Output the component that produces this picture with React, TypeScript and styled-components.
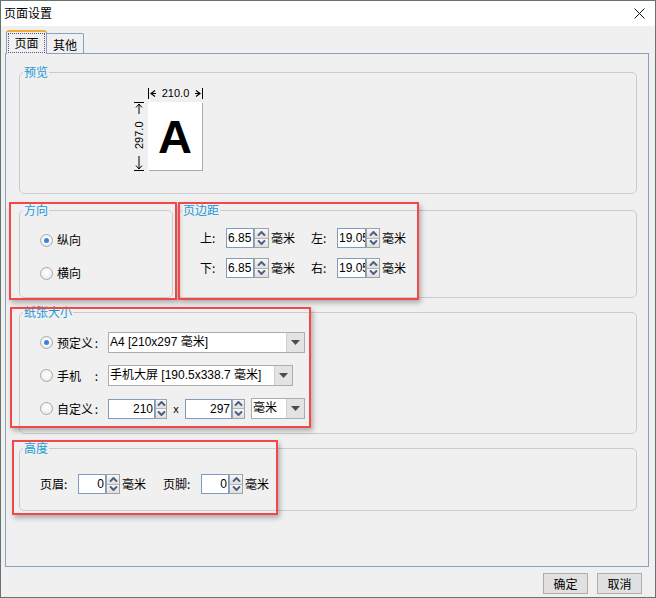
import React from "react";
import styled, { createGlobalStyle } from "styled-components";

const GlobalStyle = createGlobalStyle`
  html, body {
    margin: 0;
    padding: 0;
    background: #ffffff;
  }
  body {
    font-family: "Noto Sans CJK SC", "Liberation Sans", sans-serif;
    font-size: 12px;
    color: #000;
  }
  * {
    box-sizing: border-box;
  }
`;

const FONT_UI = `"Noto Sans CJK SC", "Liberation Sans", sans-serif`;
const FONT_NUM = `"Liberation Sans", "Noto Sans CJK SC", sans-serif`;

const Window = styled.div`
  position: relative;
  width: 656px;
  height: 598px;
  border: 1px solid #66756a;
  background: #f0f0f0;
  display: flex;
  flex-direction: column;
`;

const TitleBar = styled.div`
  height: 25px;
  background: #ffffff;
  display: flex;
  align-items: center;
  justify-content: space-between;
  padding: 0 10px 2px 3px;
  font-size: 12px;
  line-height: 16px;
`;

const CloseIcon = styled.svg`
  width: 11px;
  height: 11px;
  margin-top: 2px;
`;

const TabRow = styled.div`
  height: 27px;
  display: flex;
  align-items: flex-end;
  padding-left: 5px;
`;

const Tab = styled.div<{ $active?: boolean }>`
  position: relative;
  z-index: ${(p) => (p.$active ? 1 : 0)};
  height: ${(p) => (p.$active ? 24 : 20)}px;
  width: ${(p) => (p.$active ? 41 : 37)}px;
  margin-bottom: ${(p) => (p.$active ? -1 : 0)}px;
  border: 1px solid #8ba0bd;
  border-left: ${(p) => (p.$active ? "1px solid #8ba0bd" : "none")};
  border-bottom: none;
  border-top: ${(p) => (p.$active ? "2px solid #f2b033" : "1px solid #8ba0bd")};
  border-radius: ${(p) => (p.$active ? "3px 3px 0 0" : "0 2px 0 0")};
  background: #f0f0f0;
  display: flex;
  align-items: center;
  justify-content: center;
  padding: ${(p) => (p.$active ? "1px 1px 1px 1px" : "1px 0 0 0")};
  font-size: 12px;
`;

const TabFocus = styled.span`
  flex: 1;
  align-self: stretch;
  border: 1px dotted #55558a;
  display: flex;
  align-items: center;
  justify-content: center;
  line-height: 16px;
`;

const Panel = styled.div`
  height: 514px;
  margin: 0 6px 0 4px;
  border: 1px solid #8ba0bd;
  padding: 10px 11px 0 13px;
  display: flex;
  flex-direction: column;
`;

const Group = styled.fieldset<{ $h: number; $w?: number; $mt?: number; $grow?: boolean }>`
  margin: ${(p) => p.$mt ?? 0}px 0 0 0;
  padding: 0;
  min-width: 0;
  height: ${(p) => p.$h}px;
  width: ${(p) => (p.$w ? `${p.$w}px` : "auto")};
  flex: ${(p) => (p.$grow ? "1 1 0" : "none")};
  border: 1px solid #cbcbcb;
  border-radius: 5px;
`;

const Legend = styled.legend`
  margin-left: 3px;
  padding: 0 1px;
  color: #1a9ad6;
  font-size: 12px;
  line-height: 16px;
`;

const SplitRow = styled.div`
  display: flex;
  gap: 5px;
  margin-top: 8px;
`;

/* ---------- preview ---------- */

const PreviewBody = styled.div`
  display: flex;
  padding: 7px 0 0 113px;
`;

const VDim = styled.div`
  width: 12px;
  height: 69px;
  margin: 15px 3px 0 0;
  display: flex;
  flex-direction: column;
  align-items: center;
`;

const VDimText = styled.span`
  writing-mode: vertical-rl;
  transform: rotate(180deg);
  font-family: ${FONT_NUM};
  font-size: 11px;
  line-height: 12px;
  height: 35px;
  text-align: center;
`;

const PreviewCol = styled.div`
  display: flex;
  flex-direction: column;
`;

const HDim = styled.div`
  width: 55px;
  height: 15px;
  display: flex;
  align-items: flex-start;
  justify-content: space-between;
  padding-top: 1px;
`;

const HDimText = styled.span`
  font-family: ${FONT_NUM};
  font-size: 11px;
  line-height: 11px;
`;

const Page = styled.div`
  width: 54px;
  height: 68px;
  background: #ffffff;
  box-shadow: 1px 1px 0 #a9a9a9;
  display: flex;
  align-items: center;
  justify-content: center;
  font-family: "Liberation Sans", sans-serif;
  font-weight: bold;
  font-size: 47px;
  line-height: 47px;
  padding-top: 1px;
`;

/* ---------- controls ---------- */

const RadioList = styled.div`
  display: flex;
  flex-direction: column;
  gap: 13px;
  padding: 12px 0 0 20px;
`;

const RadioLine = styled.div<{ $h?: number }>`
  display: flex;
  align-items: center;
  height: ${(p) => p.$h ?? 20}px;
`;

const RadioCircle = styled.span<{ $on?: boolean }>`
  width: 13px;
  height: 13px;
  border-radius: 50%;
  border: 1px solid #a9a9a9;
  background: radial-gradient(circle at 50% 40%, #ffffff 0%, #f2f2f2 55%, #dedede 100%);
  display: inline-flex;
  align-items: center;
  justify-content: center;
  margin-right: 4px;
  flex: none;
  &::after {
    content: "";
    display: ${(p) => (p.$on ? "block" : "none")};
    width: 5px;
    height: 5px;
    border-radius: 50%;
    background: #3b80e0;
  }
`;

const Text = styled.span`
  font-family: ${FONT_UI};
  font-size: 12px;
  line-height: 20px;
  white-space: nowrap;
`;

const FieldLabel = styled.span<{ $w: number; $ml?: number }>`
  width: ${(p) => p.$w}px;
  margin-left: ${(p) => p.$ml ?? 0}px;
  font-size: 12px;
  line-height: 20px;
  white-space: nowrap;
  flex: none;
`;

const Unit = styled.span`
  margin-left: 2px;
  font-size: 12px;
  line-height: 20px;
  white-space: nowrap;
`;

const SpinWrap = styled.span`
  display: inline-flex;
  flex: none;
`;

const NumInput = styled.input<{ $w: number; $h: number; $right?: boolean }>`
  width: ${(p) => p.$w}px;
  height: ${(p) => p.$h}px;
  border: 1px solid #7f9bc2;
  background: #ffffff;
  padding: ${(p) => (p.$right ? "0 1px 0 1px" : "0 0 0 1px")};
  margin: 0;
  font-family: ${FONT_NUM};
  font-size: 12px;
  color: #000;
  text-align: ${(p) => (p.$right ? "right" : "left")};
  outline: none;
`;

const SpinBtns = styled.span<{ $w: number; $h: number }>`
  width: ${(p) => p.$w}px;
  height: ${(p) => p.$h}px;
  display: flex;
  flex-direction: column;
  border: 1px solid #a2a2a2;
  background: #e8e8e8;
`;

const SpinBtn = styled.span<{ $down?: boolean }>`
  flex: 1;
  display: flex;
  align-items: center;
  justify-content: center;
  background: linear-gradient(#f7f7f7, #dedede);
  border-top: ${(p) => (p.$down ? "1px solid #b4b4b4" : "none")};
  & > svg {
    width: 9px;
    height: 5px;
  }
`;

const Spinner = ({
  value,
  w,
  bw,
  h = 20,
  right
}: {
  value: string;
  w: number;
  bw: number;
  h?: number;
  right?: boolean;
}) => (
  <SpinWrap>
    <NumInput $w={w} $h={h} $right={right} value={value} readOnly />
    <SpinBtns $w={bw} $h={h}>
      <SpinBtn>
        <svg viewBox="0 0 9 5">
          <path d="M1 4.6 L4.5 1 L8 4.6" fill="none" stroke="#4a5d82" strokeWidth="2" />
        </svg>
      </SpinBtn>
      <SpinBtn $down>
        <svg viewBox="0 0 9 5">
          <path d="M1 0.4 L4.5 4 L8 0.4" fill="none" stroke="#4a5d82" strokeWidth="2" />
        </svg>
      </SpinBtn>
    </SpinBtns>
  </SpinWrap>
);

const Combo = styled.div<{ $w: number; $ml?: number }>`
  width: ${(p) => p.$w}px;
  height: 21px;
  margin-left: ${(p) => p.$ml ?? 0}px;
  border: 1px solid #adadad;
  background: #ffffff;
  display: flex;
  flex: none;
`;

const ComboText = styled.span`
  flex: 1;
  padding-left: 1px;
  font-family: ${FONT_NUM};
  font-size: 12px;
  line-height: 19px;
  white-space: nowrap;
  overflow: hidden;
`;

const ComboBtn = styled.span`
  width: 18px;
  border-left: 1px solid #d0d0d0;
  background: #e3e3e3;
  display: flex;
  align-items: center;
  justify-content: center;
  & > svg {
    width: 9px;
    height: 5px;
  }
`;

const ComboBox = ({ text, w, ml }: { text: string; w: number; ml?: number }) => (
  <Combo $w={w} $ml={ml}>
    <ComboText>{text}</ComboText>
    <ComboBtn>
      <svg viewBox="0 0 9 5">
        <path d="M0 0 L9 0 L4.5 5 Z" fill="#4c4c4c" />
      </svg>
    </ComboBtn>
  </Combo>
);

/* ---------- margins ---------- */

const MarginGrid = styled.div`
  display: grid;
  grid-template-columns: auto auto;
  justify-content: start;
  column-gap: 16px;
  row-gap: 10px;
  padding: 10px 0 0 21px;
`;

const MarginItem = styled.div`
  display: flex;
  align-items: center;
  height: 20px;
`;

/* ---------- paper ---------- */

const PaperRows = styled.div`
  display: flex;
  flex-direction: column;
  gap: 12px;
  padding: 12px 0 0 20px;
`;

const ChoiceLabel = styled.span`
  width: 51px;
  padding-right: 10px;
  display: flex;
  justify-content: space-between;
  font-size: 12px;
  line-height: 20px;
  flex: none;
`;

const Times = styled.span`
  width: 18px;
  text-align: center;
  font-family: ${FONT_NUM};
  font-size: 11px;
  line-height: 20px;
  flex: none;
`;

/* ---------- height ---------- */

const HeightRow = styled.div`
  display: flex;
  align-items: center;
  height: 20px;
  margin: 18px 0 0 20px;
`;

/* ---------- footer ---------- */

const Footer = styled.div`
  display: flex;
  justify-content: flex-end;
  gap: 9px;
  padding: 6px 13px 0 0;
`;

const DlgButton = styled.button`
  width: 45px;
  height: 21px;
  padding: 0;
  border: 1px solid #adadad;
  background: #e1e1e1;
  font-family: ${FONT_UI};
  font-size: 12px;
  line-height: 18px;
  color: #000;
`;

/* ---------- annotation overlays ---------- */

const Mark = styled.div<{ $x: number; $y: number; $w: number; $h: number }>`
  position: absolute;
  left: ${(p) => p.$x - 1}px;
  top: ${(p) => p.$y - 1}px;
  width: ${(p) => p.$w}px;
  height: ${(p) => p.$h}px;
  border: 2px solid #f24848;
  box-shadow: 2px 3px 5px rgba(0, 0, 0, 0.28);
  pointer-events: none;
`;

export default function App() {
  return (
    <>
      <GlobalStyle />
      <Window>
        <TitleBar>
          <span>页面设置</span>
          <CloseIcon viewBox="0 0 11 11">
            <path d="M0.5 0.5 L10.5 10.5 M10.5 0.5 L0.5 10.5" stroke="#111" strokeWidth="1" />
          </CloseIcon>
        </TitleBar>

        <TabRow>
          <Tab $active>
            <TabFocus>页面</TabFocus>
          </Tab>
          <Tab>其他</Tab>
        </TabRow>

        <Panel>
          <Group $h={130}>
            <Legend>预览</Legend>
            <PreviewBody>
              <VDim>
                <svg width="12" height="16" viewBox="0 0 12 16">
                  <path d="M1 0.5 L11 0.5" stroke="#000" strokeWidth="1" />
                  <path d="M6 2 L6 12" stroke="#000" strokeWidth="1" />
                  <path d="M3 5.5 L6 2 L9 5.5" fill="none" stroke="#000" strokeWidth="1" />
                </svg>
                <VDimText>297.0</VDimText>
                <svg width="12" height="18" viewBox="0 0 12 18">
                  <path d="M6 3 L6 16" stroke="#000" strokeWidth="1" />
                  <path d="M3 12.5 L6 16 L9 12.5" fill="none" stroke="#000" strokeWidth="1" />
                  <path d="M1 17.5 L11 17.5" stroke="#000" strokeWidth="1" />
                </svg>
              </VDim>
              <PreviewCol>
                <HDim>
                  <svg width="9" height="11" viewBox="0 0 9 11">
                    <path d="M0.5 0 L0.5 11" stroke="#000" strokeWidth="1" />
                    <path d="M7 2.5 L3 5.5 L7 8.5" fill="none" stroke="#000" strokeWidth="1.2" />
                    <path d="M3 5.5 L8 5.5" stroke="#000" strokeWidth="1" />
                  </svg>
                  <HDimText>210.0</HDimText>
                  <svg width="9" height="11" viewBox="0 0 9 11">
                    <path d="M2 2.5 L6 5.5 L2 8.5" fill="none" stroke="#000" strokeWidth="1.2" />
                    <path d="M1 5.5 L6 5.5" stroke="#000" strokeWidth="1" />
                    <path d="M8.5 0 L8.5 11" stroke="#000" strokeWidth="1" />
                  </svg>
                </HDim>
                <Page>A</Page>
              </PreviewCol>
            </PreviewBody>
          </Group>

          <SplitRow>
            <Group $h={96} $w={154}>
              <Legend>方向</Legend>
              <RadioList>
                <RadioLine>
                  <RadioCircle $on />
                  <Text>纵向</Text>
                </RadioLine>
                <RadioLine>
                  <RadioCircle />
                  <Text>横向</Text>
                </RadioLine>
              </RadioList>
            </Group>
            <Group $h={96} $grow>
              <Legend>页边距</Legend>
              <MarginGrid>
                <MarginItem>
                  <FieldLabel $w={26}>上:</FieldLabel>
                  <Spinner value="6.85" w={28} bw={15} />
                  <Unit>毫米</Unit>
                </MarginItem>
                <MarginItem>
                  <FieldLabel $w={26}>左:</FieldLabel>
                  <Spinner value="19.05" w={29} bw={14} />
                  <Unit>毫米</Unit>
                </MarginItem>
                <MarginItem>
                  <FieldLabel $w={26}>下:</FieldLabel>
                  <Spinner value="6.85" w={28} bw={15} />
                  <Unit>毫米</Unit>
                </MarginItem>
                <MarginItem>
                  <FieldLabel $w={26}>右:</FieldLabel>
                  <Spinner value="19.05" w={29} bw={14} />
                  <Unit>毫米</Unit>
                </MarginItem>
              </MarginGrid>
            </Group>
          </SplitRow>

          <Group $h={130} $mt={6}>
            <Legend>纸张大小</Legend>
            <PaperRows>
              <RadioLine $h={21}>
                <RadioCircle $on />
                <ChoiceLabel>
                  <span>预定义</span>
                  <span>:</span>
                </ChoiceLabel>
                <ComboBox text="A4 [210x297 毫米]" w={197} />
              </RadioLine>
              <RadioLine $h={21}>
                <RadioCircle />
                <ChoiceLabel>
                  <span>手机</span>
                  <span>:</span>
                </ChoiceLabel>
                <ComboBox text="手机大屏 [190.5x338.7 毫米]" w={185} />
              </RadioLine>
              <RadioLine $h={21}>
                <RadioCircle />
                <ChoiceLabel>
                  <span>自定义</span>
                  <span>:</span>
                </ChoiceLabel>
                <Spinner value="210" w={47} bw={12} right />
                <Times>x</Times>
                <Spinner value="297" w={47} bw={13} right />
                <ComboBox text="毫米" w={54} ml={6} />
              </RadioLine>
            </PaperRows>
          </Group>

          <Group $h={71} $mt={6}>
            <Legend>高度</Legend>
            <HeightRow>
              <FieldLabel $w={38}>页眉:</FieldLabel>
              <Spinner value="0" w={28} bw={14} right />
              <Unit>毫米</Unit>
              <FieldLabel $w={38} $ml={17}>
                页脚:
              </FieldLabel>
              <Spinner value="0" w={28} bw={14} right />
              <Unit>毫米</Unit>
            </HeightRow>
          </Group>
        </Panel>

        <Footer>
          <DlgButton>确定</DlgButton>
          <DlgButton>取消</DlgButton>
        </Footer>

        <Mark $x={9} $y={202} $w={168} $h={98} />
        <Mark $x={178} $y={202} $w={241} $h={98} />
        <Mark $x={10} $y={307} $w={301} $h={121} />
        <Mark $x={12} $y={440} $w={266} $h={75} />
      </Window>
    </>
  );
}
